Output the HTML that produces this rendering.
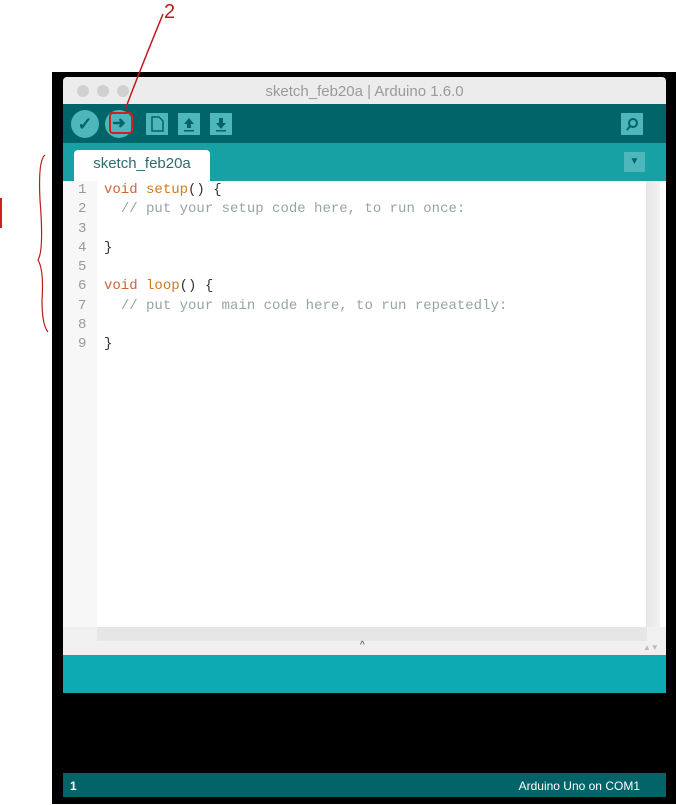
<!DOCTYPE html>
<html><head><style>
*{margin:0;padding:0;box-sizing:border-box}
body{width:676px;height:805px;background:#fff;position:relative;overflow:hidden;font-family:"Liberation Sans",sans-serif}
.a{position:absolute}
.code{font-family:"Liberation Mono",monospace;font-size:14px;line-height:19.25px;white-space:pre}
.btn{position:absolute;width:22px;height:22px;background:#4db7bb}
</style></head><body>
<div class="a" style="left:52px;top:72px;width:624px;height:732px;background:#000"></div>
<div class="a" style="left:63px;top:77px;width:603px;height:27px;background:#ececec;border-radius:4px 4px 0 0"></div>
<div class="a" style="left:77px;top:85px;width:12px;height:12px;border-radius:50%;background:#d0d0d0"></div>
<div class="a" style="left:97px;top:85px;width:12px;height:12px;border-radius:50%;background:#d0d0d0"></div>
<div class="a" style="left:117px;top:85px;width:12px;height:12px;border-radius:50%;background:#d0d0d0"></div>
<div class="a" style="left:63px;top:83px;width:603px;text-align:center;font-size:15px;color:#9a9a9a">sketch_feb20a | Arduino 1.6.0</div>
<div class="a" style="left:63px;top:104px;width:603px;height:39px;background:#006468"></div>
<div class="a" style="left:71px;top:110px;width:28px;height:28px;border-radius:50%;background:#4db7bb;color:#006468;font-size:18px;text-align:center;line-height:28px;font-weight:bold">✓</div>
<div class="a" style="left:105px;top:110px;width:28px;height:28px;border-radius:50%;background:#4db7bb;color:#006468;font-size:16px;text-align:center;line-height:28px;font-weight:bold">➜</div>
<div class="a" style="left:109px;top:112px;width:24px;height:22px;border:2px solid #d02020;border-radius:4px"></div>
<svg class="a" style="left:146px;top:113px" width="22" height="22"><rect width="22" height="22" fill="#4db7bb"/><path d="M6 4h7l4 4v10H6z" fill="none" stroke="#006468" stroke-width="1.5"/></svg>
<svg class="a" style="left:178px;top:113px" width="22" height="22"><rect width="22" height="22" fill="#4db7bb"/><path d="M11 5l-5 6h3v4h4v-4h3z" fill="#006468"/><rect x="6" y="17" width="10" height="1.5" fill="#006468"/></svg>
<svg class="a" style="left:210px;top:113px" width="22" height="22"><rect width="22" height="22" fill="#4db7bb"/><path d="M11 16l-5-6h3V5h4v5h3z" fill="#006468"/><rect x="6" y="17" width="10" height="1.5" fill="#006468"/></svg>
<svg class="a" style="left:621px;top:113px" width="22" height="22"><rect width="22" height="22" fill="#4db7bb"/><circle cx="12" cy="10" r="4" fill="none" stroke="#006468" stroke-width="2"/><path d="M9 13l-3 4" stroke="#006468" stroke-width="2"/></svg>
<div class="a" style="left:63px;top:143px;width:603px;height:38px;background:#17a1a5"></div>
<div class="a" style="left:74px;top:150px;width:136px;height:31px;background:#fff;border-radius:4px 4px 0 0;color:#2f6b6e;font-size:15px;text-align:center;line-height:28px">sketch_feb20a</div>
<div class="a" style="left:624px;top:152px;width:21px;height:20px;background:#4db7bb;color:#006468;font-size:10px;text-align:center;line-height:20px">▼</div>
<div class="a" style="left:63px;top:181px;width:603px;height:446px;background:#fff"></div>
<div class="a" style="left:63px;top:181px;width:34px;height:446px;background:#f7f7f7"></div>
<div class="a" style="left:646px;top:181px;width:14px;height:446px;background:linear-gradient(90deg,#e6e6e6,#f2f2f2)"></div>
<div class="a code" style="left:78px;top:181px;color:#999">1
2
3
4
5
6
7
8
9</div>
<div class="a code" style="left:104px;top:181px;color:#333"><span style="color:#cc6633">void</span> <span style="color:#d2791a">setup</span>() {
  <span style="color:#95a5a6">// put your setup code here, to run once:</span>

}

<span style="color:#cc6633">void</span> <span style="color:#d2791a">loop</span>() {
  <span style="color:#95a5a6">// put your main code here, to run repeatedly:</span>

}</div>
<div class="a" style="left:63px;top:627px;width:603px;height:28px;background:#f0f0f0"></div>
<div class="a" style="left:97px;top:627px;width:550px;height:14px;background:#e6e6e6"></div>
<div class="a" style="left:360px;top:640px;font-size:10px;color:#444">^</div>
<div class="a" style="left:643px;top:643px;font-size:8px;color:#bbb">▲▼</div>
<div class="a" style="left:63px;top:655px;width:603px;height:38px;background:#0eaab4"></div>
<div class="a" style="left:63px;top:773px;width:603px;height:24px;background:#006468"></div>
<div class="a" style="left:70px;top:779px;font-size:12px;color:#fff;font-weight:bold">1</div>
<div class="a" style="left:500px;top:779px;width:140px;font-size:12px;color:#fff;text-align:right">Arduino Uno on COM1</div>
<svg class="a" style="left:0;top:0" width="676" height="340">
<path d="M163 14 Q140 70 125 110" stroke="#c01818" stroke-width="1.5" fill="none"/>
<text x="164" y="18" fill="#c01818" font-size="20" font-family="Liberation Sans">2</text>
<path d="M45 155 Q38 160 40 200 Q44 250 38 260 Q44 270 42 300 Q42 325 48 332" stroke="#c01818" stroke-width="1.2" fill="none"/>
<rect x="0" y="198" width="2" height="30" fill="#d02020"/>
</svg>
</body></html>
